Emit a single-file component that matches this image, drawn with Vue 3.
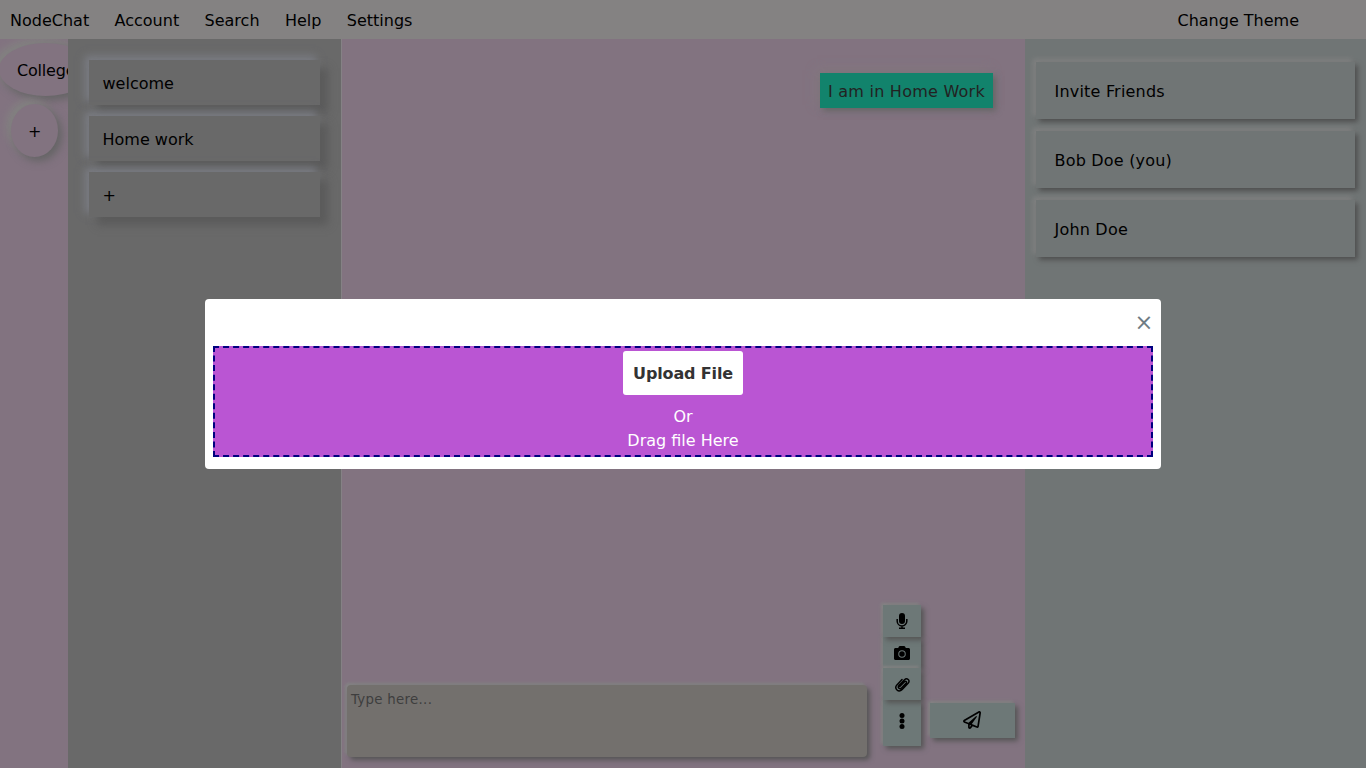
<script setup>
const menu = ['NodeChat', 'Account', 'Search', 'Help', 'Settings']
const channels = ['welcome', 'Home work', '+']
const members = ['Invite Friends', 'Bob Doe (you)', 'John Doe']
</script>

<template>
  <div class="app">
    <header>
      <nav><a v-for="m in menu" :key="m">{{ m }}</a></nav>
      <a class="theme">Change Theme</a>
    </header>
    <main>
      <aside class="rail">
        <div class="room first">College</div>
        <div class="room">+</div>
      </aside>
      <section class="channels">
        <div v-for="c in channels" :key="c" class="channel">{{ c }}</div>
      </section>
      <section class="chat">
        <div class="message">I am in Home Work</div>
        <div class="composer">
          <textarea placeholder="Type here..."></textarea>
          <div class="tools">
            <button class="tool mic">
              <svg width="16" height="16" viewBox="0 0 16 16"><rect x="5" y="0" width="6" height="11" rx="3" /><path d="M3.200 6v2.200a4.800 4.800 0 0 0 9.600 0V6M8 13v2M5 15.200h6" fill="none" stroke="#000" stroke-width="1.500" /></svg>
            </button>
            <button class="tool camera">
              <svg width="16" height="14" viewBox="0 0 512 448"><path fill-rule="evenodd" d="M512 112v288c0 26.500-21.500 48-48 48H48c-26.500 0-48-21.500-48-48V112c0-26.500 21.500-48 48-48h88l12.300-32.900C155.300 12.400 173.200 0 193.200 0h125.500c20 0 37.900 12.400 44.900 31.100L376 64h88c26.500 0 48 21.500 48 48zM376 256a120 120 0 1 0-240 0 120 120 0 0 0 240 0zm-32 0a88 88 0 1 1-176 0 88 88 0 0 1 176 0z" /></svg>
            </button>
            <button class="tool clip">
              <svg width="16" height="16" viewBox="0 0 16 16"><path d="M5 10.300 9.700 5.500c1.200-1.200 2.700.2 1.600 1.500l-4.600 4.800c-1.800 1.800-4.200-.5-2.600-2.500L9.700 3.500c2.600-2.500 6 .8 3.600 3.500l-5.900 6.200c-3.700 3.700-8.400-.7-5.300-4.500L7.200 3.400" transform="translate(.8 .2)" fill="none" stroke="#000" stroke-width="1.500" stroke-linecap="round" /></svg>
            </button>
            <button class="tool dots">
              <svg width="6" height="16" viewBox="0 0 6 16"><circle cx="3" cy="2.500" r="2.500" /><circle cx="3" cy="8" r="2.500" /><circle cx="3" cy="13.500" r="2.500" /></svg>
            </button>
          </div>
          <button class="send">
            <svg width="18" height="18" viewBox="0 0 512 512"><path d="M440 6.500L24 246.100c-34.400 19.900-31.100 70.800 5.700 85.900L144 379.600V464c0 46.400 59.200 65.500 86.600 28.600l43.800-59.100 111.900 46.200c5.900 2.400 12.100 3.600 18.300 3.600 8.200 0 16.300-2.100 23.600-6.200 12.800-7.200 21.600-20 23.900-34.500l59.400-387.200c6.100-40.100-36.900-68.800-71.500-48.900zM192 464v-64.600l36.600 15.100L192 464zm212.600-28.700l-153.800-63.500L391 169.500c10.700-15.500-9.500-33.500-23.700-21.200L155.800 332.600 48 288 464 48l-59.400 387.300z" /></svg>
          </button>
        </div>
      </section>
      <aside class="members">
        <div v-for="m in members" :key="m" class="member">{{ m }}</div>
      </aside>
    </main>
    <div class="backdrop">
      <div class="modal">
        <button class="close">×</button>
        <div class="drop">
          <button class="upload">Upload File</button>
          <span>Or</span>
          <span>Drag file Here</span>
        </div>
      </div>
    </div>
  </div>
</template>

<style>
body { margin: 0; overflow: hidden; }
</style>

<style scoped>
* { box-sizing: border-box; }
.app { height: 768px; display: flex; flex-direction: column; font: 16px/19px "DejaVu Sans", sans-serif; color: #000; background: #848282; }
button { border: 0; padding: 0; font: inherit; display: flex; align-items: center; justify-content: center; }
svg { display: block; }
header { height: 39px; flex: none; display: flex; align-items: center; justify-content: space-between; padding: 2px 67px 0 10px; }
nav { display: flex; gap: 25.400px; }
main { flex: 1; display: flex; min-height: 0; }
.rail { width: 68px; flex: none; background: #827380; overflow: hidden; padding-top: 4px; }
.room { width: max-content; height: 53px; padding: 18px 17px 16px; margin: 0 0 8px 11px; border-radius: 50%; background: #827380; box-shadow: 4px 4px 8px #646464, -4px -4px 8px #848482; }
.room.first { margin-left: -1px; padding-left: 18px; letter-spacing: -.2px; }
.channels { width: 273px; flex: none; background: #696969; padding: 21px; display: flex; flex-direction: column; gap: 11px; overflow: hidden; }
.channel { height: 45px; flex: none; padding: 14px 13.500px; background: #696969; box-shadow: 8px 8px 8px #5b5b5b, -4px -4px 8px #7b7d84; }
.chat { width: 684px; flex: none; border-left: 1px solid #858285; background: #827380; display: flex; flex-direction: column; justify-content: space-between; padding: 34px 10px 11px 5px; }
.message { align-self: flex-end; margin-right: 22px; width: 173px; white-space: nowrap; letter-spacing: .24px; height: 35px; padding: 9px 8px; color: #222; background: #12836c; box-shadow: 3px 3px 6px #666, -3px -3px 10px #84797e; }
.composer { display: flex; align-items: flex-end; }
textarea { width: 520px; height: 72px; border: 0; border-radius: 4px; padding: 7px 4px; resize: none; background: #73706d; font: 13.333px/16px "DejaVu Sans", sans-serif; letter-spacing: .3px; box-shadow: 3px 3px 5px #555, -2px -2px 3px #858585; }
textarea::placeholder { color: #3e3e3e; opacity: 1; }
.tools { width: 38px; margin: 0 9px 11px 16px; display: flex; flex-direction: column; }
.tool, .send { background: #6d7877; box-shadow: 3px 3px 5px #555, -2px -2px 3px #858585; }
.mic, .clip { height: 32px; position: relative; z-index: 1; }
.camera { height: 31px; }
.dots { height: 46px; padding-bottom: 4px; }
.send { width: 85px; height: 35px; margin-bottom: 19px; padding: 0 1px 2px 0; }
.members { flex: 1; background: #707575; padding: 23px 11px; display: flex; flex-direction: column; gap: 12px; }
.member { height: 57px; flex: none; padding: 20px 18.500px 0; letter-spacing: .2px; background: #707575; box-shadow: 3px 3px 5px #505050, -3px -3px 5px #828282; }
.backdrop { position: absolute; inset: 0 0 auto; height: 768px; display: flex; align-items: center; justify-content: center; }
.modal { width: 956px; height: 170px; border-radius: 4px; background: #fff; padding: 8px; }
.close { margin-left: auto; width: 18px; height: 30px; margin-bottom: 9px; background: none; color: #6f7c84; font-size: 22.500px; }
.drop { height: 111px; border: 2px dashed navy; background: #ba55d3; display: flex; flex-direction: column; align-items: center; padding-top: 3px; color: #fff; line-height: 24px; }
.upload { width: 120px; height: 44px; border-radius: 3px; margin-bottom: 10px; padding-top: 1px; background: #fff; color: #333; font-weight: bold; letter-spacing: -.15px; }
</style>
